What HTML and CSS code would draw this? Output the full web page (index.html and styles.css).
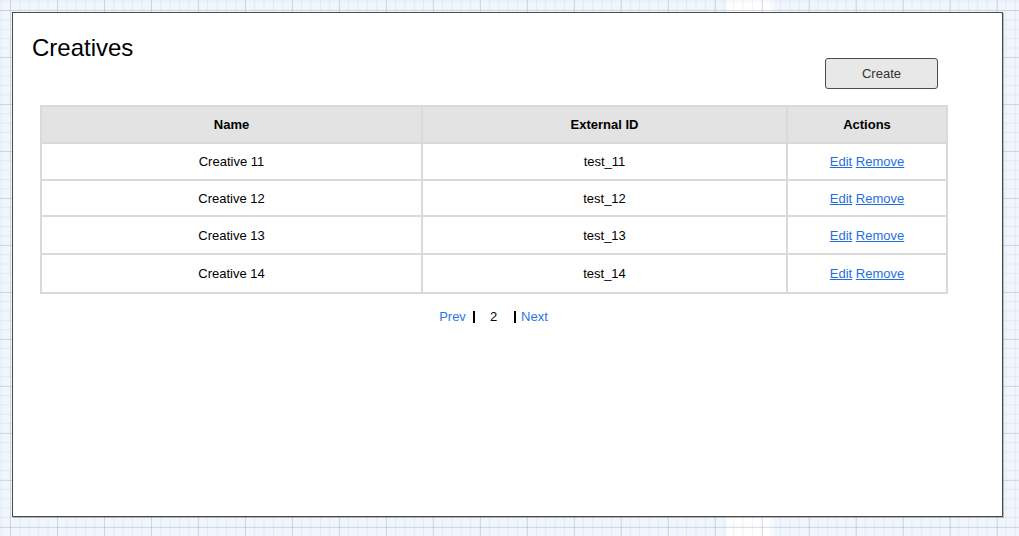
FILE: index.html
```html
<!DOCTYPE html>
<html lang="en">
<head>
<meta charset="utf-8">
<title>Creatives</title>
<link rel="stylesheet" href="styles.css">
</head>
<body>
<div class="frame">
  <header class="header">
    <h1 class="title">Creatives</h1>
    <button class="create-btn" type="button">Create</button>
  </header>
  <table class="grid-table">
    <colgroup>
      <col class="col-name">
      <col class="col-ext">
      <col class="col-actions">
    </colgroup>
    <thead>
      <tr><th>Name</th><th>External ID</th><th>Actions</th></tr>
    </thead>
    <tbody>
      <tr class="first"><td>Creative 11</td><td>test_11</td><td><a href="#">Edit</a> <a href="#">Remove</a></td></tr>
      <tr class="short"><td>Creative 12</td><td>test_12</td><td><a href="#">Edit</a> <a href="#">Remove</a></td></tr>
      <tr><td>Creative 13</td><td>test_13</td><td><a href="#">Edit</a> <a href="#">Remove</a></td></tr>
      <tr class="last"><td>Creative 14</td><td>test_14</td><td><a href="#">Edit</a> <a href="#">Remove</a></td></tr>
    </tbody>
  </table>
  <nav class="pager">
    <a class="pager-link" href="#">Prev</a><span class="pager-current">2</span><a class="pager-link" href="#">Next</a>
  </nav>
</div>
</body>
</html>
```

FILE: styles.css
```css
html, body {
  margin: 0;
  padding: 0;
}

body {
  width: 1019px;
  height: 536px;
  overflow: hidden;
  font-family: "Liberation Sans", Arial, sans-serif;
  color: #000;
  background-color: #f1f6fd;
  background-image:
    linear-gradient(to right, rgba(150, 165, 190, 0.3) 1px, transparent 1px),
    linear-gradient(to bottom, rgba(150, 165, 190, 0.3) 1px, transparent 1px),
    linear-gradient(to right, rgba(170, 185, 210, 0.2) 1px, transparent 1px),
    linear-gradient(to bottom, rgba(170, 185, 210, 0.2) 1px, transparent 1px),
    linear-gradient(to right, transparent 727px, #ffffff 727px, #ffffff 773px, transparent 773px);
  background-size: 47px 47px, 47px 47px, 9.4px 9.4px, 9.4px 9.4px, 100% 100%;
  background-position: 10px 0, 0 10px, 10px 0, 0 10px, 0 0;
  background-repeat: repeat, repeat, repeat, repeat, no-repeat;
  padding-top: 12px;
  box-sizing: border-box;
}

.frame {
  margin-left: 12px;
  width: 991px;
  height: 505px;
  box-sizing: border-box;
  border: 1px solid #4a4a4a;
  box-shadow: 1px 1px 0 rgba(0, 0, 0, 0.25);
  background: #fff;
  overflow: hidden;
}

.header {
  display: flex;
  align-items: flex-start;
  margin-top: 21px;
  padding-left: 19px;
}

.title {
  margin: 0;
  font-size: 24px;
  line-height: 28px;
  font-weight: normal;
}

.create-btn {
  margin-left: auto;
  margin-right: 64px;
  margin-top: 24px;
  width: 113px;
  height: 31px;
  box-sizing: border-box;
  border: 1px solid #4d4d4d;
  border-radius: 3px;
  background: #e8e8e8;
  font-family: "Liberation Sans", Arial, sans-serif;
  font-size: 13px;
  color: #333;
  padding: 0;
}

.grid-table {
  margin: 16px 0 0 27px;
  width: 906px;
  border-collapse: collapse;
  table-layout: fixed;
  font-size: 13px;
}

.col-name { width: 381px; }
.col-ext { width: 365px; }
.col-actions { width: 160px; }

.grid-table th,
.grid-table td {
  border: 2px solid #dadada;
  text-align: center;
  padding: 0;
  height: 36px;
}

.grid-table th {
  background: #e3e3e3;
  font-weight: bold;
  height: 35px;
}

.grid-table tr.first td {
  height: 35px;
}

.grid-table tr.short td {
  height: 34px;
}

.grid-table tr.last td {
  height: 37px;
}

.grid-table a {
  color: #1f6fe0;
  text-decoration: underline;
}

.pager {
  display: flex;
  justify-content: center;
  align-items: center;
  margin-top: 15px;
  margin-left: 27px;
  width: 907px;
  font-size: 13px;
  line-height: 15px;
}

.pager-link {
  color: #2a78e4;
  text-decoration: none;
}

.pager-current {
  display: inline-block;
  margin: 0 5px 0 7px;
  padding: 0 17px 0 15px;
  line-height: 12px;
  height: 12px;
  border-left: 2px solid #000;
  border-right: 2px solid #000;
}
```
